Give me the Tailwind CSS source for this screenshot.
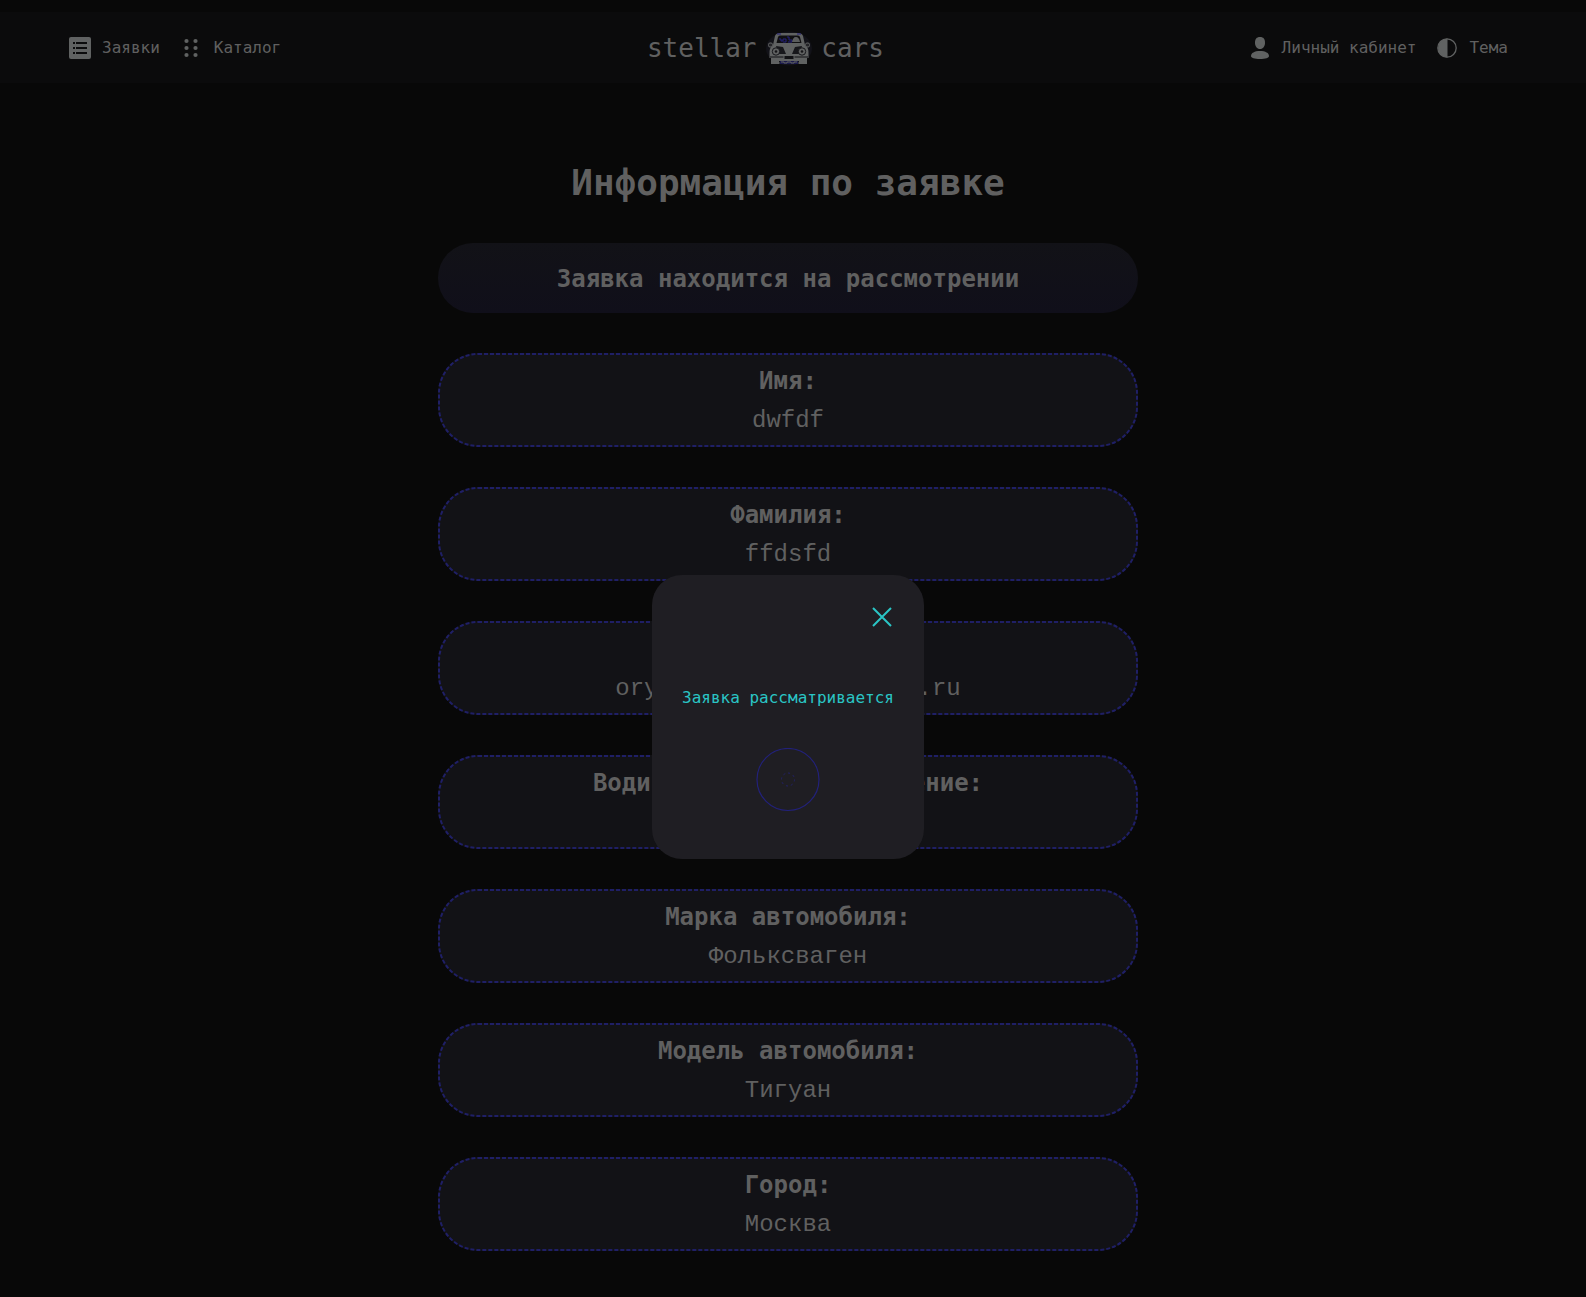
<!DOCTYPE html>
<html lang="ru">
<head>
<meta charset="utf-8">
<meta name="viewport" content="width=device-width, initial-scale=1">
<title>Stellar Cars — Информация по заявке</title>
<script src="https://cdn.jsdelivr.net/npm/@tailwindcss/browser@4"></script>
</head>
<body class="min-h-screen bg-[#080808] pt-3 font-['DejaVu_Sans_Mono',monospace] text-[#606060]">

<header class="flex h-[71px] items-center justify-between bg-[#0b0b0c] pr-[78px] pl-[68px]">
  <nav class="flex items-center gap-6 leading-6">
    <a href="#" class="flex items-center gap-2.5">
      <svg class="size-6" viewBox="0 0 24 24" aria-hidden="true">
        <rect x="1" y="1" width="22" height="22" rx="2" fill="#606262"/>
        <path d="M5 7h2M5 12h2M5 17h2M8 7h11M8 12h11M8 17h11" stroke="#0b0b0c" stroke-width="2"/>
      </svg>
      <span>Заявки</span>
    </a>
    <a href="#" class="flex items-center gap-4">
      <svg class="h-6 w-[14px]" viewBox="0 0 14 24" fill="#606262" aria-hidden="true">
        <circle cx="2.5" cy="5" r="2.1"/><circle cx="11.5" cy="5" r="2.1"/>
        <circle cx="2.5" cy="12" r="2.1"/><circle cx="11.5" cy="12" r="2.1"/>
        <circle cx="2.5" cy="19" r="2.1"/><circle cx="11.5" cy="19" r="2.1"/>
      </svg>
      <span>Каталог</span>
    </a>
  </nav>

  <a href="#" class="flex items-center text-[26px] leading-6" aria-label="stellar cars">
    <span class="w-[118px]">stellar</span>
    <svg class="h-9 w-12" viewBox="0 0 48 36" aria-hidden="true">
      <ellipse cx="24" cy="18.500" rx="23" ry="17" fill="#121218"/>
      <path d="M10 6Q11 3 15 3H33Q37 3 38 6L40 15Q44 18 43.500 24V28H42V34H34V31H14V34H6V28H4.500V24Q4 18 8 15Z" fill="#606262"/>
      <path d="M13 7Q13.500 5.500 15 5.500H33Q34.500 5.500 35 7L36.500 13H11.500Z" fill="#101012"/>
      <path d="M14 9h2v2h2v-2h3v3h-3M22 7h2v3h3v2h-4M29 8h2v2M12 4h4M32 4h4" fill="none" stroke="#24217c"/>
      <path d="M27 12q1-5 4-5t4 5" fill="#5b5d5d"/>
      <path d="M11 16 18 17 21 24H13M37 16 30 17 27 24H35" fill="#17171b"/>
      <path d="M5 27H19M29 27H43" stroke="#111114"/>
      <rect x="19" y="25.500" width="10" height="4" fill="#111114" stroke="#606262"/>
      <path d="M15 31H33V34H15Z" fill="#1c1b4c"/>
      <path d="M16 32h3v1h3v-1h4v1h3v-1h3M6 33h9M33 33h9" fill="none" stroke="#606262"/>
      <circle cx="11" cy="21.500" r="3.700" fill="#606262" stroke="#17171b"/><circle cx="37" cy="21.500" r="3.700" fill="#606262" stroke="#17171b"/>
      <circle cx="11" cy="21.500" r="1.300" fill="#151518"/><circle cx="37" cy="21.500" r="1.300" fill="#151518"/>
      <rect x="3.500" y="13" width="4" height="4" rx="1.500" fill="#252529" stroke="#606262"/><rect x="40.500" y="13" width="4" height="4" rx="1.500" fill="#252529" stroke="#606262"/>
    </svg>
    <span class="w-[71px] text-right">cars</span>
  </a>

  <nav class="flex items-center gap-[21px] leading-6">
    <a href="#" class="flex items-center gap-3">
      <svg class="h-6 w-5" viewBox="0 0 20 24" fill="#606262" aria-hidden="true">
        <path d="M10 1C13.500 1 15 3.200 15 6.500C15 10.500 13 13 10 13S5 10.500 5 6.500C5 3.200 6.500 1 10 1Z"/>
        <path d="M1 20C1 17 4.500 15 10 15S19 17 19 20C19 22 15.500 23 10 23S1 22 1 20Z"/>
      </svg>
      <span>Личный кабинет</span>
    </a>
    <button type="button" class="flex items-center gap-3">
      <svg class="h-6 w-5" viewBox="0 0 20 24" aria-hidden="true">
        <circle cx="10" cy="12" r="9.200" fill="none" stroke="#606262" stroke-width="1.300"/>
        <path d="M10.500 2.500A9.500 9.500 0 1 0 10.500 21.500Z" fill="#606262"/>
      </svg>
      <span>Тема</span>
    </button>
  </nav>
</header>

<main class="flex flex-col items-center pt-20 pr-[10px] pb-11 text-center text-2xl leading-10">
  <h1 class="mb-10 text-4xl leading-10 font-bold">Информация по заявке</h1>
  <p class="mb-10 w-full max-w-[700px] rounded-[35px] bg-linear-to-b from-[#121217] to-[#100f1a] pt-4 pb-[14px] font-bold leading-10">Заявка находится на рассмотрении</p>

  <dl class="flex w-full max-w-[700px] flex-col gap-10">
    <div class="relative rounded-[40px] bg-[#121216] pt-2 pb-1.5">
      <dt class="font-bold">Имя:</dt>
      <dd class="font-['Liberation_Mono',monospace]">dwfdf<svg class="absolute inset-0 size-full" aria-hidden="true"><rect class="h-[calc(100%-2px)] w-[calc(100%-2px)]" x="1" y="1" rx="39" fill="none" stroke="#1f1f66" stroke-width="2" stroke-dasharray="4 2"/></svg></dd>
    </div>
    <div class="relative rounded-[40px] bg-[#121216] pt-2 pb-1.5">
      <dt class="font-bold">Фамилия:</dt>
      <dd class="font-['Liberation_Mono',monospace]">ffdsfd<svg class="absolute inset-0 size-full" aria-hidden="true"><rect class="h-[calc(100%-2px)] w-[calc(100%-2px)]" x="1" y="1" rx="39" fill="none" stroke="#1f1f66" stroke-width="2" stroke-dasharray="4 2"/></svg></dd>
    </div>
    <div class="relative rounded-[40px] bg-[#121216] pt-2 pb-1.5">
      <dt class="font-bold">Почта:</dt>
      <dd class="flex justify-center gap-[259px] font-['Liberation_Mono',monospace]"><span>ory</span><span>.ru</span><svg class="absolute inset-0 size-full" aria-hidden="true"><rect class="h-[calc(100%-2px)] w-[calc(100%-2px)]" x="1" y="1" rx="39" fill="none" stroke="#1f1f66" stroke-width="2" stroke-dasharray="4 2"/></svg></dd>
    </div>
    <div class="relative min-h-[94px] rounded-[40px] bg-[#121216] pt-2 pb-1.5">
      <dt class="font-bold">Водительское удостоверение:</dt>
      <dd><svg class="absolute inset-0 size-full" aria-hidden="true"><rect class="h-[calc(100%-2px)] w-[calc(100%-2px)]" x="1" y="1" rx="39" fill="none" stroke="#1f1f66" stroke-width="2" stroke-dasharray="4 2"/></svg></dd>
    </div>
    <div class="relative rounded-[40px] bg-[#121216] pt-2 pb-1.5">
      <dt class="font-bold">Марка автомобиля:</dt>
      <dd class="font-['Liberation_Mono',monospace]">Фольксваген<svg class="absolute inset-0 size-full" aria-hidden="true"><rect class="h-[calc(100%-2px)] w-[calc(100%-2px)]" x="1" y="1" rx="39" fill="none" stroke="#1f1f66" stroke-width="2" stroke-dasharray="4 2"/></svg></dd>
    </div>
    <div class="relative rounded-[40px] bg-[#121216] pt-2 pb-1.5">
      <dt class="font-bold">Модель автомобиля:</dt>
      <dd class="font-['Liberation_Mono',monospace]">Тигуан<svg class="absolute inset-0 size-full" aria-hidden="true"><rect class="h-[calc(100%-2px)] w-[calc(100%-2px)]" x="1" y="1" rx="39" fill="none" stroke="#1f1f66" stroke-width="2" stroke-dasharray="4 2"/></svg></dd>
    </div>
    <div class="relative rounded-[40px] bg-[#121216] pt-2 pb-1.5">
      <dt class="font-bold">Город:</dt>
      <dd class="font-['Liberation_Mono',monospace]">Москва<svg class="absolute inset-0 size-full" aria-hidden="true"><rect class="h-[calc(100%-2px)] w-[calc(100%-2px)]" x="1" y="1" rx="39" fill="none" stroke="#1f1f66" stroke-width="2" stroke-dasharray="4 2"/></svg></dd>
    </div>
  </dl>
</main>

<!-- Status dialog over the page -->
<div class="fixed inset-0 flex items-start justify-center pt-[575px] pr-[10px]">
  <div role="dialog" aria-label="Статус заявки" class="flex flex-col items-center rounded-[30px] bg-[#1f1e23] px-[30px] pt-[30px] pb-[47px] text-[#2ac5c5]">
    <button type="button" class="self-end" aria-label="Закрыть">
      <svg class="size-6" viewBox="0 0 24 24" fill="none" stroke="currentColor" stroke-width="2" aria-hidden="true"><path d="M3 3 21 21M21 3 3 21"/></svg>
    </button>
    <p class="mt-[57px] mb-[38px] leading-6">Заявка рассматривается</p>
    <svg class="size-16" viewBox="0 0 64 64" fill="none" stroke="#22217a" aria-hidden="true">
      <circle cx="32" cy="31.500" r="31" stroke-width="1.200"/>
      <circle cx="32" cy="31.500" r="6.500" stroke="#22216a" stroke-dasharray="2 3"/>
    </svg>
  </div>
</div>
</body>
</html>
